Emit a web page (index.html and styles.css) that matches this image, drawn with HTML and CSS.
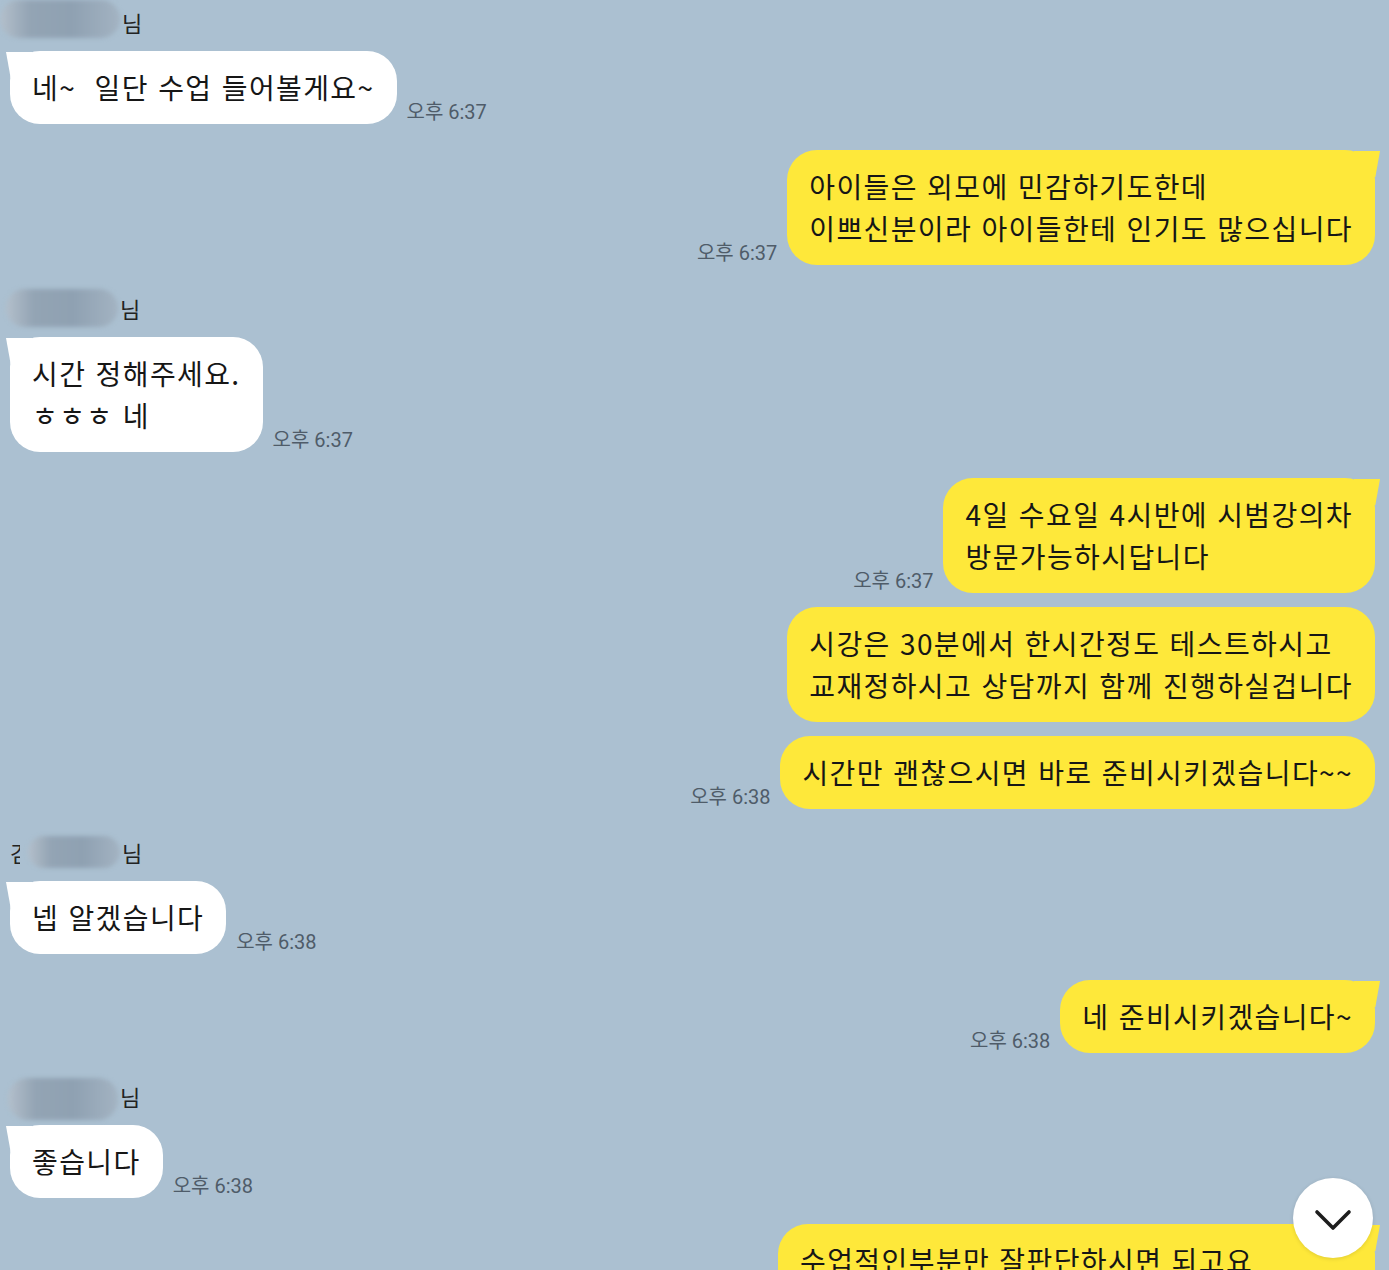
FILE: index.html
```html
<!DOCTYPE html>
<html lang="ko">
<head>
    <meta charset="UTF-8">
    <meta name="viewport" content="width=device-width, initial-scale=1.0">
    <title>채팅</title>
    <link rel="stylesheet" href="styles.css">
</head>
<body>

    <div class="chat">

        <div class="group left first-group">
            <div class="name"><span class="blur blur-a"></span>님</div>
            <div class="row">
                <div class="bubble tail">네~&nbsp;&nbsp;일단 수업 들어볼게요~</div>
                <span class="time">오후 6:37</span>
            </div>
        </div>

        <div class="group right">
            <div class="row">
                <span class="time">오후 6:37</span>
                <div class="bubble tail">아이들은 외모에 민감하기도한데<br>이쁘신분이라 아이들한테 인기도 많으십니다</div>
            </div>
        </div>

        <div class="group left">
            <div class="name"><span class="blur blur-b"></span>님</div>
            <div class="row">
                <div class="bubble tail">시간 정해주세요.<br>ㅎㅎㅎ 네</div>
                <span class="time">오후 6:37</span>
            </div>
        </div>

        <div class="group right">
            <div class="row">
                <span class="time">오후 6:37</span>
                <div class="bubble tail">4일 수요일 4시반에 시범강의차<br>방문가능하시답니다</div>
            </div>
            <div class="row">
                <div class="bubble">시강은 30분에서 한시간정도 테스트하시고<br>교재정하시고 상담까지 함께 진행하실겁니다</div>
            </div>
            <div class="row">
                <span class="time">오후 6:38</span>
                <div class="bubble">시간만 괜찮으시면 바로 준비시키겠습니다~~</div>
            </div>
        </div>

        <div class="group left">
            <div class="name"><span class="cut">김</span><span class="blur blur-c"></span>님</div>
            <div class="row">
                <div class="bubble tail">넵 알겠습니다</div>
                <span class="time">오후 6:38</span>
            </div>
        </div>

        <div class="group right">
            <div class="row">
                <span class="time">오후 6:38</span>
                <div class="bubble tail">네 준비시키겠습니다~</div>
            </div>
        </div>

        <div class="group left">
            <div class="name"><span class="blur blur-d"></span>님</div>
            <div class="row">
                <div class="bubble tail">좋습니다</div>
                <span class="time">오후 6:38</span>
            </div>
        </div>

        <div class="group right">
            <div class="row">
                <div class="bubble tail wide">수업적인부분만 잘판단하시면 되고요<br>&nbsp;</div>
            </div>
        </div>

    </div>

    <button class="scroll-down" aria-label="아래로">
        <svg width="38" height="22" viewBox="0 0 38 22">
            <path d="M3 3 L19 19 L35 3" fill="none" stroke="#1d1d1d" stroke-width="3.6" stroke-linecap="round" stroke-linejoin="round"/>
        </svg>
    </button>

</body>
</html>
```

FILE: styles.css
```css
html, body {
    margin: 0;
    height: 1270px;
    overflow: hidden;
}
body {
    background-color: #abc0d1;
    font-family: "Noto Sans CJK KR", "Noto Sans", sans-serif;
    color: #161616;
    position: relative;
}
.chat {
    display: flex;
    flex-direction: column;
    padding: 5px 14px 0 10px;
}
.group {
    display: flex;
    flex-direction: column;
    gap: 14px;
    margin-top: 26px;
}
.group.first-group {
    margin-top: 0;
}
.group.left {
    align-items: flex-start;
    gap: 12px;
}
.group.right {
    align-items: flex-end;
}
.name {
    display: flex;
    align-items: center;
    height: 34px;
    font-size: 22px;
    color: #222;
}
.blur {
    display: inline-block;
    height: 38px;
    border-radius: 20px;
    background: linear-gradient(90deg, #b3bfcb 0%, #93a4b4 25%, #8fa1b2 60%, #a3b3c2 100%);
    filter: blur(2px);
    margin-right: 2px;
}
.blur-a {
    width: 120px;
    margin-left: -10px;
    margin-top: -6px;
}
.blur-b {
    width: 112px;
    margin-left: -4px;
}
.blur-c {
    width: 92px;
    height: 32px;
    margin-left: 8px;
    position: relative;
}
.blur-d {
    width: 110px;
    height: 42px;
    margin-left: -2px;
    margin-top: 6px;
}
.cut {
    display: inline-block;
    width: 10px;
    overflow: hidden;
}
.row {
    display: flex;
    align-items: flex-end;
    gap: 10px;
}
.bubble {
    position: relative;
    font-size: 28px;
    line-height: 42px;
    letter-spacing: 1.4px;
    padding: 15px 22px 16px 22px;
    border-radius: 30px;
    white-space: nowrap;
}
.bubble.wide {
    box-sizing: border-box;
    width: 597px;
}
.left .bubble {
    background-color: #ffffff;
}
.right .bubble {
    background-color: #fee83a;
}
.left .bubble.tail::before {
    content: "";
    position: absolute;
    left: -4px;
    top: 1px;
    width: 26px;
    height: 26px;
    background: #ffffff;
    clip-path: polygon(0 0, 100% 0, 100% 100%, 18% 100%);
}
.right .bubble.tail::before {
    content: "";
    position: absolute;
    right: -5px;
    top: 1px;
    width: 26px;
    height: 26px;
    background: #fee83a;
    clip-path: polygon(0 0, 100% 0, 82% 100%, 0 100%);
}
.time {
    font-family: Roboto, "Noto Sans CJK KR", sans-serif;
    font-size: 20px;
    line-height: 24px;
    color: #4f5c69;
    margin-bottom: 0;
    white-space: nowrap;
}
.scroll-down {
    position: absolute;
    right: 16px;
    bottom: 12px;
    width: 80px;
    height: 80px;
    border: none;
    border-radius: 50%;
    background-color: #ffffff;
    box-shadow: 0 1px 4px rgba(0,0,0,0.12);
    display: flex;
    align-items: center;
    justify-content: center;
    padding: 0;
    padding-top: 4px;
    cursor: pointer;
}
```
